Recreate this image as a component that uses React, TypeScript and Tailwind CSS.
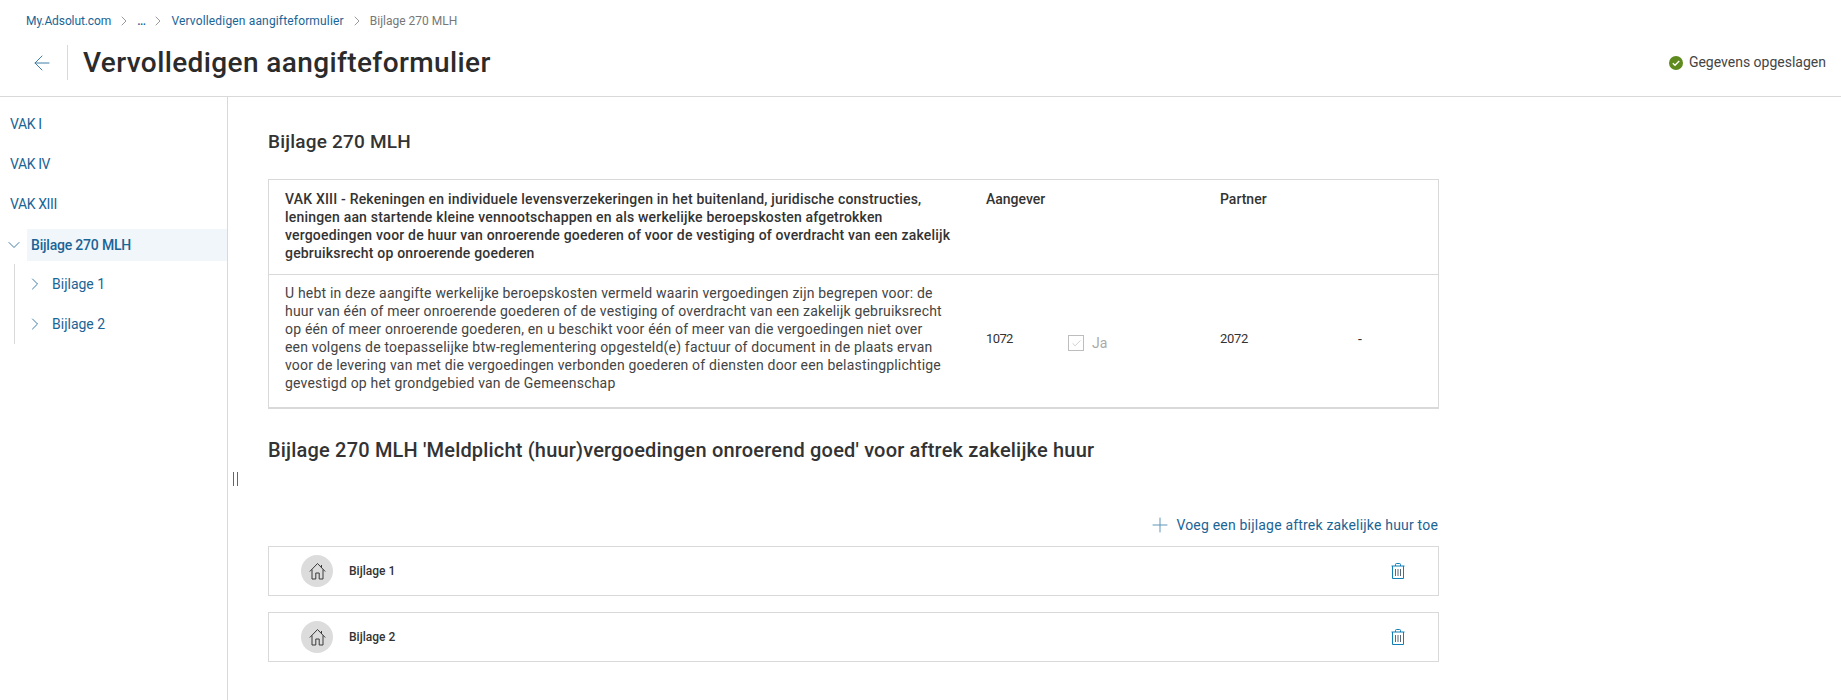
import { ArrowLeft, Check, ChevronDown, ChevronRight, Plus } from "lucide-react";

const FONT = "font-['Roboto','Liberation_Sans',sans-serif]";

function HomeIcon() {
  return (
    <svg width="17" height="18" viewBox="0 0 17 18" fill="none" stroke="#3a3a3a" strokeWidth="1">
      <path d="M0.800 9.500 8.500 1.500l7.700 8" />
      <path d="M3 7.500v9.500h3.800v-6h3.400v6H14V7.500" />
      <path d="M12.500 3v3" />
    </svg>
  );
}

function TrashIcon() {
  return (
    <svg width="14" height="16" viewBox="0 0 14 16" fill="none" stroke="#0f7fb5" strokeWidth="1">
      <path d="M0.500 3h13" />
      <path d="M4.500 3V1.500a1 1 0 0 1 1-1h3a1 1 0 0 1 1 1V3" />
      <path d="M1.500 3v12.500h11V3" />
      <path d="M4.500 6v7M7 6v7M9.500 6v7" stroke="#5a6b78" />
    </svg>
  );
}

function SavedIcon() {
  return (
    <svg width="14" height="14" viewBox="0 0 14 14">
      <circle cx="7" cy="7" r="7" fill="#5e8a1e" />
      <path d="M3.800 7.300 6 9.300l4.200-4.300" fill="none" stroke="#fff" strokeWidth="1.400" />
    </svg>
  );
}

function Breadcrumb() {
  const sep = <ChevronRight size={16} strokeWidth={1} className="mx-[-2px] text-[#666]" />;
  return (
    <div className="flex h-[14px] items-center gap-[7px] pl-[26px] text-[12px] leading-[14px] text-[#1a6496]">
      <span className="tracking-[-0.1px]">My.Adsolut.com</span>
      {sep}
      <span className="font-medium tracking-[-0.6px]">...</span>
      {sep}
      <span className="tracking-[0.16px]">Vervolledigen aangifteformulier</span>
      {sep}
      <span className="text-[#777]">Bijlage 270 MLH</span>
    </div>
  );
}

function Header() {
  return (
    <div className="h-[97px] border-b border-[#d9d9d9] pt-[14px]">
      <Breadcrumb />
      <div className="mt-[17px] flex items-center justify-between pr-[15px]">
        <div className="flex items-center">
          <div className="flex h-[35px] w-[68px] items-center justify-start border-r border-[#d9d9d9] pl-[30px]">
            <ArrowLeft size={24} strokeWidth={1} className="text-[#3f7ea8]" />
          </div>
          <h1 className="ml-[15px] text-[28px] leading-[35px] font-medium tracking-[0.39px] text-[#2b2b2b]">
            Vervolledigen aangifteformulier
          </h1>
        </div>
        <div className="flex items-center gap-[6px] text-[14px] text-[#444]">
          <SavedIcon />
          <span>Gegevens opgeslagen</span>
        </div>
      </div>
    </div>
  );
}

function Sidebar() {
  return (
    <div className="w-[228px] shrink-0 border-r border-[#d9d9d9] pt-[7px] text-[14px] text-[#1a6496]">
      <div className="flex h-[40px] items-center pl-[10px] tracking-[-0.4px]">VAK I</div>
      <div className="flex h-[40px] items-center pl-[10px] tracking-[-0.4px]">VAK IV</div>
      <div className="flex h-[40px] items-center pl-[10px] tracking-[-0.4px]">VAK XIII</div>
      <div className="flex h-[40px] items-center pt-[2px]">
        <ChevronDown size={20} strokeWidth={1} className="ml-[4px] shrink-0" />
        <div className="ml-[3px] flex h-[32px] flex-1 items-center bg-[#f1f6fa] pl-[4px] font-medium tracking-[-0.2px]">
          Bijlage 270 MLH
        </div>
      </div>
      <div className="ml-[14px] border-l border-[#d9d9d9]">
        <div className="flex h-[40px] items-center pl-[10px]">
          <ChevronRight size={20} strokeWidth={1} />
          <span className="ml-[7px]">Bijlage 1</span>
        </div>
        <div className="flex h-[40px] items-center pl-[10px]">
          <ChevronRight size={20} strokeWidth={1} />
          <span className="ml-[7px]">Bijlage 2</span>
        </div>
      </div>
    </div>
  );
}

function AnnexRow({ label }: { label: string }) {
  return (
    <div className="flex h-[50px] items-center border border-[#d9d9d9] pr-[33px] pl-[32px]">
      <div className="flex h-[32px] w-[32px] items-center justify-center rounded-full bg-[#dcdcdc]">
        <HomeIcon />
      </div>
      <span className="ml-[16px] flex-1 text-[12px] font-medium text-[#333]">{label}</span>
      <TrashIcon />
    </div>
  );
}

function DeclarationTable() {
  return (
    <div className="mt-[25px] border border-b-2 border-[#d9d9d9] text-[14px] leading-[18px] text-[#333]">
      <div className="flex h-[95px] border-b border-[#d9d9d9] pt-[10px] font-medium">
        <div className="w-[717px] pl-[16px] tracking-[0.19px]">
          VAK XIII - Rekeningen en individuele levensverzekeringen in het buitenland, juridische constructies,
          <br />
          leningen aan startende kleine vennootschappen en als werkelijke beroepskosten afgetrokken
          <br />
          vergoedingen voor de huur van onroerende goederen of voor de vestiging of overdracht van een zakelijk
          <br />
          gebruiksrecht op onroerende goederen
        </div>
        <div className="w-[234px]">Aangever</div>
        <div>Partner</div>
      </div>
      <div className="flex h-[132px] items-center pb-[4px]">
        <div className="mt-[-2px] w-[717px] pl-[16px] tracking-[0.19px] text-[#444]">
          U hebt in deze aangifte werkelijke beroepskosten vermeld waarin vergoedingen zijn begrepen voor: de
          <br />
          huur van één of meer onroerende goederen of de vestiging of overdracht van een zakelijk gebruiksrecht
          <br />
          op één of meer onroerende goederen, en u beschikt voor één of meer van die vergoedingen niet over
          <br />
          een volgens de toepasselijke btw-reglementering opgesteld(e) factuur of document in de plaats ervan
          <br />
          voor de levering van met die vergoedingen verbonden goederen of diensten door een belastingplichtige
          <br />
          gevestigd op het grondgebied van de Gemeenschap
        </div>
        <div className="w-[82px] text-[13px] tracking-[-0.6px]">1072</div>
        <div className="mt-[8px] flex w-[152px] items-center gap-[8px] text-[#aaa]">
          <div className="flex h-[16px] w-[16px] items-center justify-center border border-[#bdbdbd]">
            <Check size={11} strokeWidth={1} className="text-[#999]" />
          </div>
          <span>Ja</span>
        </div>
        <div className="w-[138px] text-[13px] tracking-[-0.3px]">2072</div>
        <div>-</div>
      </div>
    </div>
  );
}

export default function App() {
  return (
    <div className={`flex h-[700px] flex-col bg-white ${FONT}`}>
      <Header />
      <div className="flex flex-1">
        <Sidebar />
        <div className="relative flex-1 pl-[40px]">
          <div className="absolute top-[375px] left-[5px] h-[14px] w-[5px] border-x border-[#666]" />
          <div className="w-[1171px] pt-[33px]">
            <h2 className="text-[19px] leading-[24px] font-medium tracking-[0.2px] text-[#333]">Bijlage 270 MLH</h2>
            <DeclarationTable />
            <h2 className="mt-[29px] text-[20px] leading-[24px] font-medium tracking-[0.18px] text-[#333]">
              Bijlage 270 MLH 'Meldplicht (huur)vergoedingen onroerend goed' voor aftrek zakelijke huur
            </h2>
            <div className="mt-[53px] flex h-[20px] items-center justify-end gap-[4px] pr-[1px] text-[14px] tracking-[0.19px] text-[#1a6496]">
              <Plus size={24} strokeWidth={1} className="text-[#5f95b8]" />
              <span>Voeg een bijlage aftrek zakelijke huur toe</span>
            </div>
            <div className="mt-[11px] flex flex-col gap-[16px]">
              <AnnexRow label="Bijlage 1" />
              <AnnexRow label="Bijlage 2" />
            </div>
          </div>
        </div>
      </div>
    </div>
  );
}
